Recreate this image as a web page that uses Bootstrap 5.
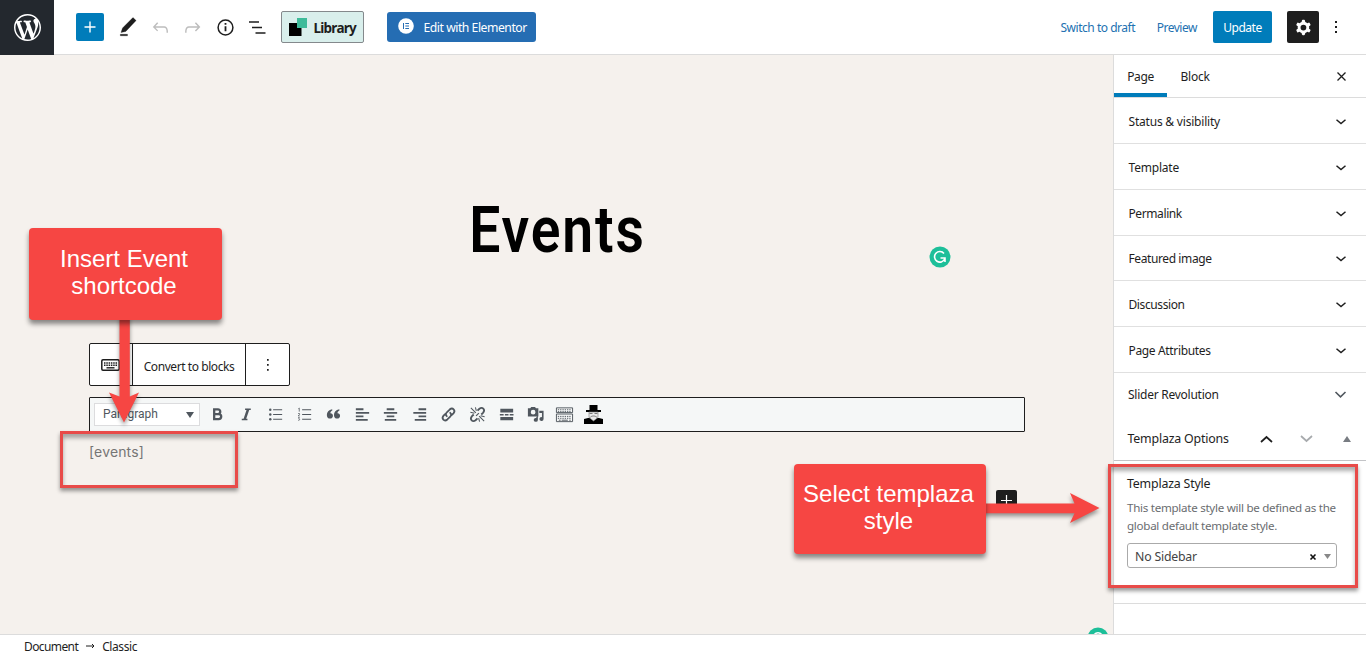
<!DOCTYPE html>
<html lang="en">
<head>
<meta charset="utf-8">
<meta name="viewport" content="width=device-width, initial-scale=1">
<title>Events – Edit page</title>
<link href="https://cdn.jsdelivr.net/npm/bootstrap@5.3.0/dist/css/bootstrap.min.css" rel="stylesheet">
<style>
  body{font-family:"Noto Sans","Open Sans",sans-serif;font-size:12px;line-height:18px;letter-spacing:-.2px;color:#1e1e1e;height:657px;overflow:hidden;background:#fff}
  svg{display:block;flex:none;overflow:visible}
  .topbar{height:55px;border-bottom:1px solid #dcdcdc}
  .wp-home{width:54px;height:55px;background:#23282e;color:#fff}
  .inserter{width:28px;height:28px;margin-left:22px;background:#007cba;border-radius:2px}
  .tools{margin-left:12px}
  .tools svg{margin-right:9.5px}
  .library{width:83px;height:32px;margin-left:2px;background:#d9efec;border:1px solid #84898c;border-radius:2px;font-size:13.5px;font-weight:700;letter-spacing:-.75px;padding:2px 0 0 7px}
  .elementor{width:149px;height:30px;margin-left:23px;background:#256db3;color:#fff;border-radius:3px;padding:2px 0 0 11px;letter-spacing:-.55px;font-size:12.2px;letter-spacing:-.47px}
  .blue{color:#2271b1;letter-spacing:-.47px;padding-top:2px}
  .update{width:59px;height:32px;background:#007cba;color:#fff;border-radius:2px;margin:0 15px 0 16px;letter-spacing:-.5px;padding-top:2px}
  .cog{width:32px;height:32px;background:#1e1e1e;border-radius:2px}
  .workspace{height:579px}
  .canvas{background:#f5f1ed}
  .page-title{font-family:Roboto,sans-serif;font-weight:600;font-size:65px;line-height:76px;letter-spacing:2.2px;color:#000;margin:0;padding-top:137px;width:1115px;transform:scaleX(.85)}
  .block-tools{width:201px;height:43px;margin:75px 0 0 89px;border:1px solid #1e1e1e;border-radius:2px;background:#fff}
  .block-tools > * + *{border-left:1px solid #1e1e1e}
  .convert{letter-spacing:-.43px}
  .classic-bar{width:936px;height:35px;margin:11px 0 0 89px;border:1px solid #1e1e1e;background:#f5f7f7;color:#50575e;border-radius:1px}
  .format{width:106px;height:23px;margin-left:4px;border:1px solid #dcdcde;background:#fff;font-family:Roboto,sans-serif;letter-spacing:0;padding:0 5px 1px 8px}
  .classic-icons{margin-left:3px;margin-top:-1px}
  .classic-icons > span{width:28.93px;display:flex;justify-content:center}
  .shortcode{margin:10px 0 0 89px;font-family:Inter,sans-serif;font-size:14px;letter-spacing:.15px;line-height:20px;color:#757575}
  .side{width:253px;border-left:1px solid #dcdcdc;background:#fff}
  .tabs{height:43px;border-bottom:1px solid #dcdcdc}
  .tabs .current{width:53px;border-bottom:4px solid #007cba;padding-top:6px;letter-spacing:-.4px}
  .panel-row{height:45.85px;border-bottom:1px solid #e0e0e0;padding:3px 19px 0 14.5px}
  .options{height:45px;border-bottom:1px solid #c3c4c7;padding:1px 15px 0 13.500px;font-size:12.4px}
  .style-box{height:143px;border-bottom:1px solid #dcdcdc;padding:14px 0 0 13px}
  .style-name{font-size:12.4px}
  .hint{color:#6a6d70;font-size:11.6px;line-height:18px;letter-spacing:-.28px;margin:6px 0 8px}
  .picker{width:210px;height:25px;border:1px solid #aaa;border-radius:3px;padding:3px 5px 0 7px;color:#444;font-size:12.3px}
  .crumbs{height:23px;border-top:1px solid #dcdcdc;padding-left:24px;line-height:23px;letter-spacing:-.6px}
  .over{position:absolute}
  .note{width:193px;height:92px;background:#f64643;color:#fff;border-radius:4px;font-family:"Liberation Sans",sans-serif;font-size:24px;line-height:27px;letter-spacing:0;box-shadow:0 4px 5px rgba(0,0,0,.45);text-align:center;padding:17px 3px 0 0}
  .frame{border:3px solid #e84b49;box-shadow:0 3px 4px rgba(0,0,0,.4),inset 0 4px 4px rgba(0,0,0,.32)}
  .arrow{filter:drop-shadow(0 3px 2px rgba(0,0,0,.4))}
</style>
</head>
<body class="position-relative">
<header class="topbar d-flex align-items-center">
  <div class="wp-home d-flex align-items-center justify-content-center">
    <svg width="27" height="27" viewBox="0 0 20 20" fill="currentColor"><path d="M20 10c0-5.51-4.49-10-10-10C4.48 0 0 4.49 0 10c0 5.52 4.48 10 10 10 5.51 0 10-4.48 10-10zM7.78 15.37L4.37 6.22c.55-.02 1.17-.08 1.17-.08.5-.06.44-1.13-.06-1.11 0 0-1.45.11-2.37.11-.18 0-.37 0-.58-.01C4.12 2.69 6.87 1.11 10 1.11c2.33 0 4.45.87 6.05 2.34-.68-.11-1.65.39-1.65 1.58 0 .74.45 1.36.9 2.1.35.61.55 1.36.55 2.46 0 1.49-1.4 5-1.4 5l-3.03-8.37c.54-.02.82-.17.82-.17.5-.05.44-1.25-.06-1.22 0 0-1.44.12-2.38.12-.87 0-2.33-.12-2.33-.12-.5-.03-.56 1.2-.06 1.22l.92.08 1.26 3.41zM17.41 10c.24-.64.74-1.87.43-4.25.7 1.29 1.05 2.71 1.05 4.25 0 3.29-1.73 6.24-4.4 7.78.97-2.59 1.94-5.2 2.92-7.78zM6.1 18.09C3.12 16.65 1.11 13.53 1.11 10c0-1.3.23-2.48.72-3.59C3.25 10.3 4.67 14.2 6.1 18.09zm4.03-6.63l2.58 6.98c-.86.29-1.76.45-2.71.45-.79 0-1.57-.11-2.29-.33.81-2.38 1.62-4.74 2.42-7.1z"/></svg>
  </div>
  <div class="inserter d-flex align-items-center justify-content-center"><svg width="12" height="12" viewBox="0 0 12 12" stroke="#fff" stroke-width="1.4"><path d="M6 .5v11M.5 6h11"/></svg></div>
  <div class="tools d-flex align-items-center">
    <svg width="23" height="23" viewBox="0 0 24 24" fill="#1e1e1e"><path d="M21 4.800L17.700 1.600 6.800 12.600l-1.600 4.700 5-1.200L21 4.800zM4.500 20.600h7.500v-1.500H4.500v1.500z" stroke="#1e1e1e" stroke-width=".3"/></svg>
    <svg width="23" height="23" viewBox="0 0 24 24" fill="#bdbdbd"><path d="M18.3 11.7c-.6-.6-1.4-.9-2.3-.9H6.7l2.9-3.3-1.1-1-4.5 5L8.500 16l1-1-2.700-2.700H16c.5 0 .9.2 1.3.5 1 1 1 3.400 1 4.500v.3h1.500v-.2c0-1.500 0-4.300-1.500-5.700z"/></svg>
    <svg width="23" height="23" viewBox="0 0 24 24" fill="#bdbdbd"><path d="M15.6 6.500l-1.100 1 2.900 3.300H8c-.9 0-1.700.3-2.300.9-1.400 1.500-1.400 4.200-1.400 5.600v.2h1.500v-.3c0-1.100 0-3.500 1-4.500.3-.3.7-.5 1.300-.5h9.200L14.500 15l1.100 1.100 4.600-4.600-4.600-5z"/></svg>
    <svg width="23" height="23" viewBox="0 0 23 23" fill="none" stroke="#1e1e1e"><circle cx="11.500" cy="11.500" r="7.400" stroke-width="1.500"/><path d="M11.500 10.300v5M11.500 7v1.800" stroke-width="1.800"/></svg>
    <svg width="23" height="23" viewBox="0 0 23 23" fill="none" stroke="#1e1e1e" stroke-width="1.400"><path d="M3 6h10M6 11.500h10M9.500 17H19.500"/></svg>
  </div>
  <div class="library d-flex align-items-center"><svg style="margin:-2px 7px 0 0" width="18" height="18" viewBox="0 0 18 18"><path d="M0 5h12.500v13H0z"/><path d="M8 0h10v10h-10z" fill="#3ebb9a"/></svg>Library</div>
  <div class="elementor d-flex align-items-center"><svg style="margin:-4px 10px 0 0" width="16" height="16" viewBox="0 0 16 16"><circle cx="8" cy="8" r="7.800" fill="#fff"/><path d="M5.500 5v6M7.300 5.500H11M7.300 8H11M7.300 10.500H11" stroke="#256db3"/></svg>Edit with Elementor</div>
  <div class="ms-auto d-flex align-items-center">
    <span class="blue">Switch to draft</span><span class="blue" style="margin-left:21.500px">Preview</span>
    <div class="update d-flex align-items-center justify-content-center">Update</div>
    <div class="cog d-flex align-items-center justify-content-center"><svg width="23" height="23" viewBox="0 0 24 24" fill="#fff"><path fill-rule="evenodd" d="M10.289 4.836A1 1 0 0111.275 4h1.306a1 1 0 01.987.836l.244 1.466c.787.26 1.503.679 2.108 1.218l1.393-.522a1 1 0 011.216.437l.653 1.130a1 1 0 01-.23 1.273l-1.148.944a6.025 6.025 0 010 2.435l1.149.946a1 1 0 01.23 1.272l-.653 1.130a1 1 0 01-1.216.437l-1.394-.522c-.605.54-1.320.958-2.108 1.218l-.244 1.466a1 1 0 01-.987.836h-1.306a1 1 0 01-.986-.836l-.244-1.466a5.995 5.995 0 01-2.108-1.218l-1.394.522a1 1 0 01-1.217-.436l-.653-1.131a1 1 0 01.23-1.272l1.149-.946a6.026 6.026 0 010-2.435l-1.148-.944a1 1 0 01-.23-1.272l.653-1.131a1 1 0 011.217-.437l1.393.522a5.994 5.994 0 012.108-1.218l.244-1.466zM14.929 12a3 3 0 11-6 0 3 3 0 016 0z"/></svg></div>
    <svg style="margin:0 28.500px 0 14.500px" width="4" height="16" viewBox="0 0 4 16" fill="#1e1e1e"><path d="M1 2h2v2H1zM1 7h2v2H1zM1 12h2v2H1z"/></svg>
  </div>
</header>

<div class="workspace d-flex">
  <main class="canvas flex-grow-1 overflow-hidden">
    <h1 class="page-title text-center">Events</h1>
    <div class="block-tools d-flex align-items-stretch">
      <div class="d-flex align-items-center" style="width:42px;padding-left:11px"><svg width="19" height="12" viewBox="0 0 19 12" fill="none" stroke="#1e1e1e"><rect x=".8" y=".8" width="17.400" height="10.400" rx="1.200" stroke-width="1.500"/><path d="M3 4h13M3 6.300h13" stroke-width="1.500" stroke-dasharray="1.500 .8"/><path d="M5.500 8.800h8" stroke-width="1.400"/></svg></div>
      <div class="d-flex align-items-center justify-content-center convert" style="width:113px"><span class="pt-1">Convert to blocks</span></div>
      <div class="d-flex align-items-center justify-content-center flex-grow-1"><svg width="4" height="14" viewBox="0 0 4 14" fill="#1e1e1e"><path d="M1 1h1.700v1.700H1zM1 6h1.700v1.700H1zM1 11h1.700v1.700H1z"/></svg></div>
    </div>
    <div class="classic-bar d-flex align-items-center">
      <div class="format d-flex align-items-center justify-content-between">Paragraph<svg style="margin-top:2px" width="8" height="6" viewBox="0 0 8 6" fill="#50575e"><path d="M0 0h8L4 6z"/></svg></div>
      <div class="classic-icons d-flex align-items-center">
        <span><svg width="19" height="19" viewBox="0 0 20 20" fill="none" stroke="#50575e" stroke-width="2.400"><path d="M6.500 4.700h4a2.300 2.300 0 010 4.800h-4zM6.500 9.500h4.700a2.600 2.600 0 010 5.400H6.500z"/></svg></span>
        <span><svg width="19" height="19" viewBox="0 0 20 20" fill="none" stroke="#50575e"><path d="M8.500 4.500h6M5 15.300h6" stroke-width="1.700"/><path d="M11.700 4.500L8 15.300" stroke-width="2.600"/></svg></span>
        <span><svg width="19" height="19" viewBox="0 0 20 20" fill="#50575e" stroke="#50575e"><g stroke="none"><circle cx="4.500" cy="5" r="1.300"/><circle cx="4.500" cy="10" r="1.300"/><circle cx="4.500" cy="15" r="1.300"/></g><path d="M7.500 5H17M7.500 10H17M7.500 15H17" stroke-width="1.300"/></svg></span>
        <span><svg width="19" height="19" viewBox="0 0 20 20" fill="none" stroke="#50575e"><path d="M7.500 5H17M7.500 10H17M7.500 15H17" stroke-width="1.200"/><path d="M3.500 4l1-.8V7M3.200 9h1.600v1L3.300 11.500H5M3.200 13.300h1.500l-.7 1.200c1.500.3 1 2-.8 1.500" stroke-width=".8"/></svg></span>
        <span><svg width="19" height="19" viewBox="0 0 20 20" fill="#50575e"><path id="quoteMark" d="M8.500 4.500l.4.900c-1.500.8-2.300 2-2.200 3.200 1.600-.1 2.700 1.100 2.700 2.700 0 1.700-1.200 3-2.900 3-2.200 0-3.500-1.600-3.500-3.900 0-2.800 2-5.100 5.500-5.900z"/><use href="#quoteMark" x="7.500"/></svg></span>
        <span><svg width="19" height="19" viewBox="0 0 20 20" stroke="#50575e" stroke-width="1.900"><path d="M3 4.500h8M3 8.200h14M3 11.900h8M3 15.600h12.500"/></svg></span>
        <span><svg width="19" height="19" viewBox="0 0 20 20" stroke="#50575e" stroke-width="1.900"><path d="M6 4.500h8M3 8.200h14M6 11.900h8M4 15.600h12"/></svg></span>
        <span><svg width="19" height="19" viewBox="0 0 20 20" stroke="#50575e" stroke-width="1.900"><path d="M9 4.500h8M3.500 8.200H17M9 11.900h8M5 15.600h12"/></svg></span>
        <span><svg width="19" height="19" viewBox="0 0 20 20" fill="none" stroke="#50575e" stroke-width="1.900" stroke-linecap="round"><path d="M8.200 11.800c-1.300-1.200-1.200-2.900 0-4l3-3c3.200-2.700 6.700.8 4 4l-1.700 1.700M11.800 8.200c1.300 1.200 1.200 2.900 0 4l-3 3c-3.200 2.700-6.700-.8-4-4l1.700-1.700"/></svg></span>
        <span><svg width="19" height="19" viewBox="0 0 20 20" fill="none" stroke="#50575e" stroke-width="1.900"><path d="M10 6l2-2c3.200-2.500 6.500.9 4 4l-2 2M10 14l-2 2c-3.200 2.500-6.500-.9-4-4l2-2"/><path d="M8.300 8.200L3 3M8.800 6.300L7.800 2.500M6.700 8.600L2.500 7.600M11.700 11.800L17 17M11.200 13.700l1 3.800M13.300 11.400l4.200 1" stroke-width="1.100"/><path d="M8.500 11.500l3-3" stroke-width="1.300"/></svg></span>
        <span><svg width="19" height="19" viewBox="0 0 20 20" fill="#50575e"><path d="M3.500 4h13.500v4H3.500zM3.500 12.500h13.500v3.500H3.500zM3 9.500h4v1.500H3zM8.300 9.500h3.800v1.500H8.300zM13.400 9.500h4v1.500h-4z"/></svg></span>
        <span><svg width="19" height="19" viewBox="0 0 20 20" fill="#50575e"><path fill-rule="evenodd" d="M2 3.500h2.500L5.500 2h4l1 1.500H13V12H2zM7.500 5a2.500 2.500 0 100 5 2.500 2.500 0 000-5z"/><path d="M14 6h4.500v8.800a2.200 2 0 11-1.700-2V8.500H14zM12.500 10.500v5.300a2.200 2 0 11-1.700-2V13z"/></svg></span>
        <span><svg width="19" height="19" viewBox="0 0 20 20" fill="none" stroke="#50575e"><path d="M1.500 3h17v5h-17zM1.500 9.500h17v8h-17z"/><path d="M3 5h14M3 7h14M3 12h14M3 14h14" stroke-dasharray="1.400 1"/><path d="M4 16h2M7 16h6.500M15 16h1.500"/></svg></span>
        <span><svg width="19" height="19" viewBox="0 0 19 19"><path d="M5.500 0h8v5h-8zM2 5h15v2H2zM0 14l4-1h11l4 1V19H0z"/><path d="M5 7h9v5.500L9.500 16 5 12.500z" fill="#e8e8e8" stroke="#777" stroke-width=".6"/><path d="M5.500 8.500h3M10.500 8.500h3M6 12.500c1.500-2 5.500-2 7 0" fill="none" stroke="#777"/></svg></span>
      </div>
    </div>
    <div class="shortcode">[events]</div>
  </main>

  <aside class="side flex-shrink-0">
    <div class="tabs d-flex align-items-stretch">
      <div class="current d-flex align-items-center justify-content-center">Page</div>
      <div class="d-flex align-items-center" style="padding:2px 0 0 13.500px">Block</div>
      <svg class="ms-auto align-self-center" style="margin-right:20.500px" width="9" height="9" viewBox="0 0 9 9" stroke="#1e1e1e" stroke-width="1.300"><path d="M.5.5l8 8M8.500.5l-8 8"/></svg>
    </div>
    <div class="panel-row d-flex align-items-center justify-content-between">Status &amp; visibility<svg width="12" height="6" viewBox="0 0 12 6" fill="none" stroke="#1e1e1e" stroke-width="1.500"><path d="M1.500.8L6 4.600 10.500.8"/></svg></div>
    <div class="panel-row d-flex align-items-center justify-content-between">Template<svg width="12" height="6" viewBox="0 0 12 6" fill="none" stroke="#1e1e1e" stroke-width="1.500"><path d="M1.500.8L6 4.600 10.500.8"/></svg></div>
    <div class="panel-row d-flex align-items-center justify-content-between" style="letter-spacing:-.4px">Permalink<svg width="12" height="6" viewBox="0 0 12 6" fill="none" stroke="#1e1e1e" stroke-width="1.500"><path d="M1.500.8L6 4.600 10.500.8"/></svg></div>
    <div class="panel-row d-flex align-items-center justify-content-between" style="letter-spacing:-.4px">Featured image<svg width="12" height="6" viewBox="0 0 12 6" fill="none" stroke="#1e1e1e" stroke-width="1.500"><path d="M1.500.8L6 4.600 10.500.8"/></svg></div>
    <div class="panel-row d-flex align-items-center justify-content-between" style="letter-spacing:-.4px">Discussion<svg width="12" height="6" viewBox="0 0 12 6" fill="none" stroke="#1e1e1e" stroke-width="1.500"><path d="M1.500.8L6 4.600 10.500.8"/></svg></div>
    <div class="panel-row d-flex align-items-center justify-content-between" style="letter-spacing:-.35px">Page Attributes<svg width="12" height="6" viewBox="0 0 12 6" fill="none" stroke="#1e1e1e" stroke-width="1.500"><path d="M1.500.8L6 4.600 10.500.8"/></svg></div>
    <div class="panel-row d-flex align-items-center justify-content-between border-0 ps-0 pt-0" style="height:43px;letter-spacing:-.25px"><span style="padding-left:14px">Slider Revolution</span><svg width="13" height="8" viewBox="0 0 13 8" fill="none" stroke="#50575e" stroke-width="1.600"><path d="M1.500 1l5 4.800L11.500 1"/></svg></div>
    <div class="options d-flex align-items-center">Templaza Options
      <svg class="ms-auto" width="13" height="8" viewBox="0 0 13 8" fill="none" stroke="#1e1e1e" stroke-width="1.700"><path d="M1 7l5.500-5L12 7"/></svg>
      <svg style="margin:0 30px 0 27px" width="13" height="8" viewBox="0 0 13 8" fill="none" stroke="#a7aaad" stroke-width="1.700"><path d="M1 1l5.500 5L12 1"/></svg>
      <svg width="8" height="6" viewBox="0 0 8 6" fill="#787c82"><path d="M0 6h8L4 0z"/></svg>
    </div>
    <div class="style-box">
      <div class="style-name">Templaza Style</div>
      <p class="hint">This template style will be defined as the<br>global default template style.</p>
      <div class="picker d-flex align-items-center">No Sidebar
        <svg class="ms-auto me-2" width="6" height="6" viewBox="0 0 6 6" stroke="#111" stroke-width="1.600"><path d="M.5.5l5 5M5.500.5l-5 5"/></svg>
        <svg style="margin-top:-2px" width="7" height="5" viewBox="0 0 7 5" fill="#888"><path d="M0 0h7L3.500 5z"/></svg>
      </div>
    </div>
  </aside>
</div>

<footer class="crumbs d-flex"><span>Document</span>
  <svg class="align-self-center" style="margin:0 7px 0 8px" width="9" height="6" viewBox="0 0 9 6" fill="none" stroke="#1e1e1e"><path d="M0 3h8M6 1L8 3 6 5"/></svg><span style="letter-spacing:-.4px">Classic</span></footer>

<!-- writing assistant badges -->
<svg class="over" style="left:928.500px;top:245.500px" width="22" height="22" viewBox="0 0 22 22"><circle cx="11" cy="11" r="10.500" fill="#1dbf99"/><path d="M15 7.500A5.300 5.300 0 1015.700 13M11.500 12H16v4" fill="none" stroke="#fff" stroke-width="1.600"/></svg>
<div class="over overflow-hidden" style="left:1087px;top:627px;width:22px;height:7px"><svg width="22" height="22" viewBox="0 0 22 22"><circle cx="11" cy="11" r="10.500" fill="#1dbf99"/><path d="M7 8c2-3 6-3 8 0" fill="none" stroke="#fff" stroke-width="1.600"/></svg></div>
<div class="over" style="left:996px;top:490px;width:21px;height:21px;background:#1e1e1e;border-radius:2px"><svg width="21" height="21" viewBox="0 0 21 21" stroke="#fff" stroke-width="1.200"><path d="M10.500 5v11M5 10.500h11"/></svg></div>

<!-- annotations -->
<div class="over frame" style="left:60px;top:431px;width:178px;height:57px"></div>
<div class="over frame" style="left:1108px;top:464px;width:250px;height:124px"></div>
<svg class="over arrow" style="left:109px;top:315px" width="30" height="108" viewBox="0 0 30 108" fill="#f64643"><path d="M10.500 0h10.300v81.500l9.200-4L15 107.500 0 77.500l10.500 4z"/></svg>
<svg class="over arrow" style="left:980px;top:493px" width="120" height="30" viewBox="0 0 120 30" fill="#f64643"><path d="M0 10.500v9.700h94.500l-4.500 9.800 29.500-15L90 0l4.500 10.500z"/></svg>
<div class="over note" style="left:29px;top:228px">Insert Event<br>shortcode</div>
<div class="over note" style="left:794px;top:464px;width:192px;height:90px;padding-top:16px">Select templaza<br>style</div>

<script src="https://cdn.jsdelivr.net/npm/bootstrap@5.3.0/dist/js/bootstrap.bundle.min.js"></script>
</body>
</html>
